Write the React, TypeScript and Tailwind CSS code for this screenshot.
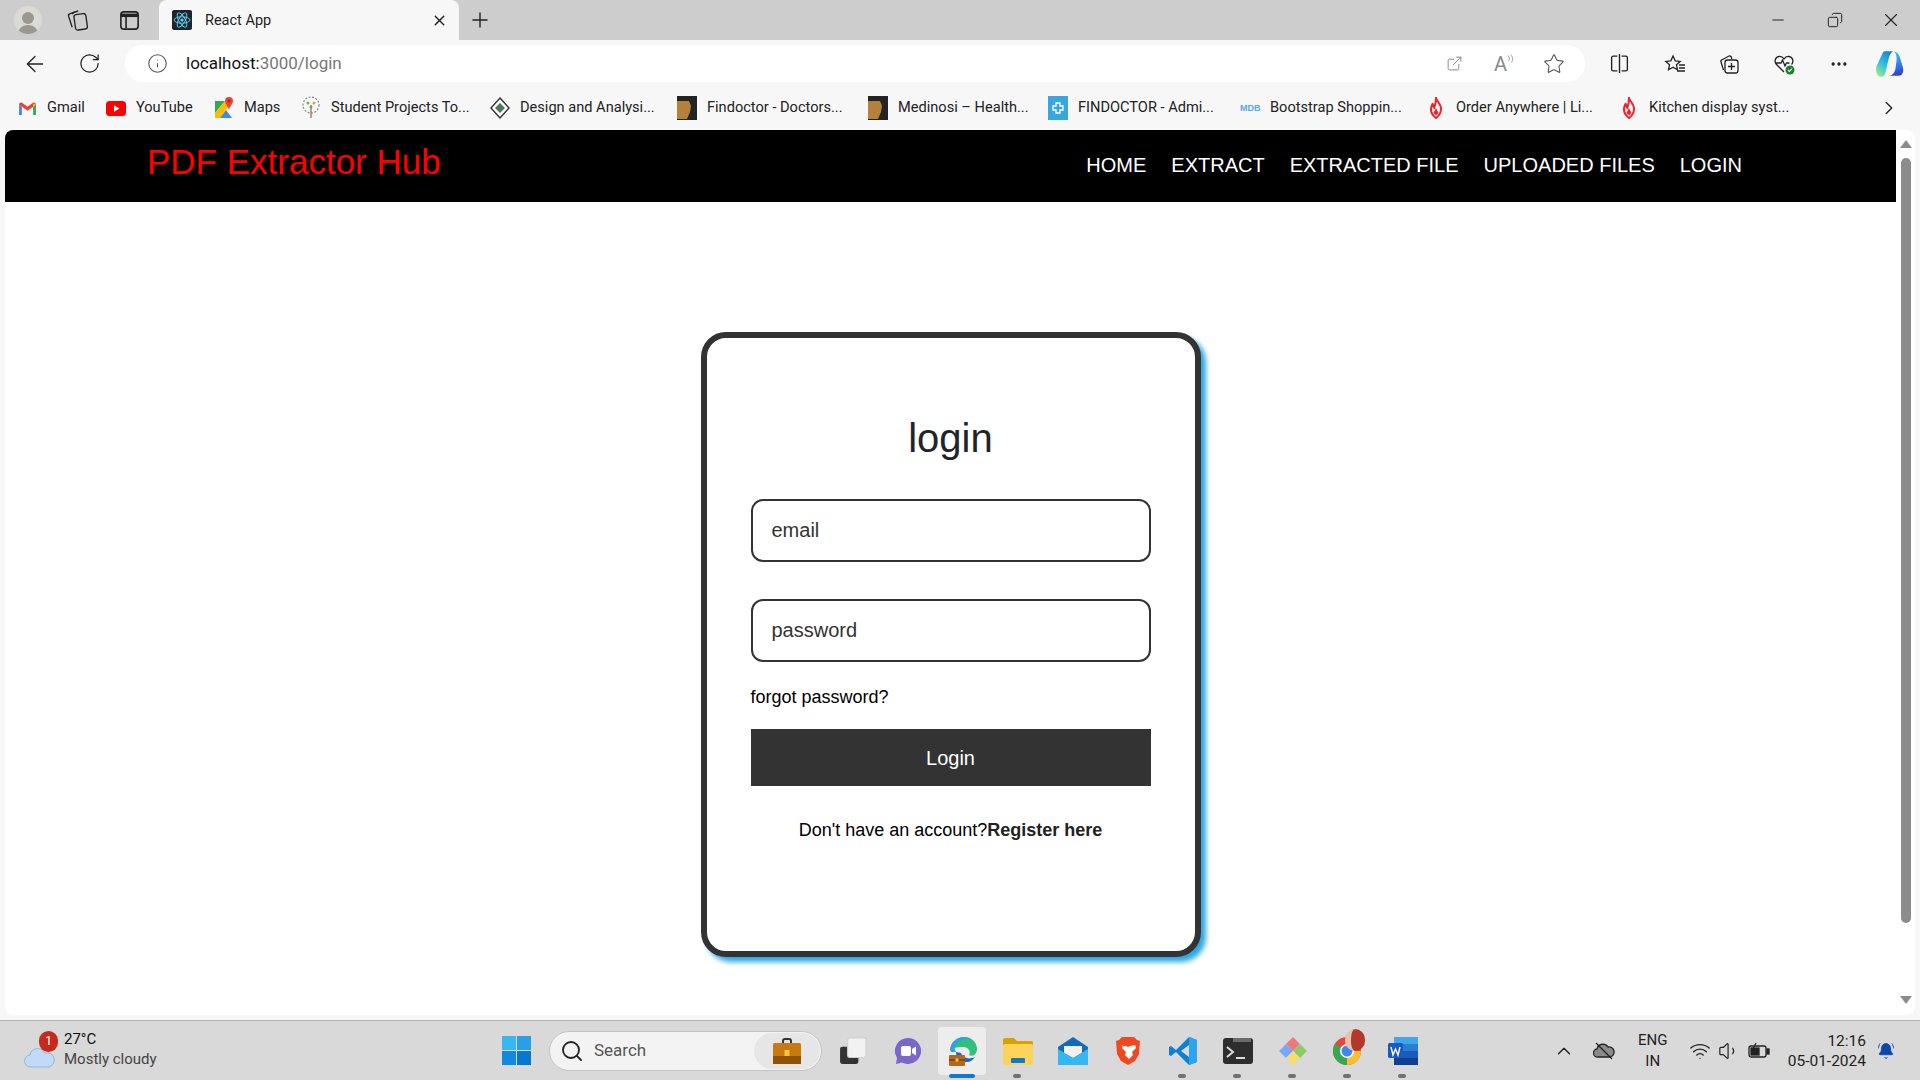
import React from "react"
import {
    ArrowLeft,
    BellRing,
    ChevronRight,
    ChevronUp,
    Copy,
    Ellipsis,
    ExternalLink,
    Info,
    Minus,
    Plus,
    RotateCw,
    Search,
    Star,
    Volume1,
    Wifi,
    X,
} from "lucide-react"

const GmailIcon = () => (
    <svg viewBox="0 0 20 16" className="w-[19px] h-[15px]">
        <path d="M1 15V4l3 2v9H1z" fill="#4285f4" />
        <path d="M16 15V6l3-2v11h-3z" fill="#34a853" />
        <path d="M1 4c0-2 2-3 3.500-2L10 6l5.500-4C17 1 19 2 19 4l-3 2-6 4.500L4 6 1 4z" fill="#ea4335" />
        <path d="M16 2.500 19 4l-3 2V2.500z" fill="#fbbc04" />
    </svg>
)

const YoutubeIcon = () => (
    <svg viewBox="0 0 20 15" className="w-5 h-[15px]">
        <rect width="20" height="15" rx="3.500" fill="#f00" />
        <path d="M8 4.200v6.600l5.500-3.300L8 4.200z" fill="#fff" />
    </svg>
)

const MapsIcon = () => (
    <svg viewBox="0 0 20 24" className="w-5 h-6">
        <path d="M1 5h10L1 17V5z" fill="#34a853" />
        <path d="M1 17 11 5l3 6-8 11H1v-5z" fill="#fbbc04" />
        <path d="M6 22l6-8 6 8H6z" fill="#4285f4" />
        <path d="M15 1a4 4 0 0 1 4 4c0 3-4 6-4 9-.5-3-4-6-4-9a4 4 0 0 1 4-4z" fill="#ea4335" />
        <circle cx="15" cy="5" r="1.400" fill="#a52714" />
    </svg>
)

const TreeIcon = () => (
    <svg viewBox="0 0 20 24" className="w-5 h-6">
        <circle cx="10" cy="9" r="8" fill="none" stroke="#7f8f7a" strokeWidth="1.200" strokeDasharray="2 1.500" />
        <circle cx="7" cy="7" r="1.500" fill="#7fae5a" />
        <circle cx="13" cy="7" r="1.500" fill="#d9a441" />
        <circle cx="10" cy="11" r="1.500" fill="#6d9ccf" />
        <path d="M10 9v13" stroke="#9b8468" strokeWidth="1.500" />
    </svg>
)

const DiamondIcon = () => (
    <svg viewBox="0 0 20 24" className="w-5 h-6">
        <path d="M10 2 19 12 10 22 1 12 10 2z" fill="#fff" stroke="#333" strokeWidth="1.400" />
        <path d="M10 7l5 5-5 5-5-5 5-5z" fill="#4c7a5a" />
    </svg>
)

const FindoctorIcon = () => (
    <svg viewBox="0 0 20 24" className="w-5 h-6">
        <rect width="20" height="24" fill="#232323" />
        <path d="M0 5h12l2 5-1 6-3 7H0V5z" fill="#b57f3c" />
    </svg>
)

const CrossIcon = () => (
    <svg viewBox="0 0 20 24" className="w-5 h-6">
        <rect width="20" height="24" fill="#3aa6e0" />
        <path d="M8 7h4v3h3v4h-3v3H8v-3H5v-4h3V7z" fill="none" stroke="#fff" strokeWidth="1.300" />
    </svg>
)

const MdbIcon = () => (
    <div className="w-5 text-[9px] font-bold leading-none text-[#5aa5e8] font-['Liberation_Sans',sans-serif]">
        MDB
    </div>
)

const FlameIcon = () => (
    <svg viewBox="0 0 16 26" className="w-[14px] h-[22px]">
        <path
            d="M8 1c0 3 6 7 6 13 0 3-1 6-3 8l-3 3-3-3c-2-2-3-5-3-8 0-2 1-4 2-6l2 5c1-3 2-8 2-12z"
            fill="none"
            stroke="#e8262c"
            strokeWidth="2.400"
            strokeLinejoin="round"
        />
        <path d="M8 13l-3 6 3 3 3-3-3-6z" fill="#e8262c" />
    </svg>
)

const ReactFavicon = () => (
    <svg viewBox="0 0 20 20" className="w-5 h-5">
        <rect width="20" height="20" rx="2" fill="#20232a" />
        <g fill="none" stroke="#61dafb" strokeWidth="0.900">
            <ellipse cx="10" cy="10" rx="8" ry="3.200" />
            <ellipse cx="10" cy="10" rx="8" ry="3.200" transform="rotate(60 10 10)" />
            <ellipse cx="10" cy="10" rx="8" ry="3.200" transform="rotate(120 10 10)" />
        </g>
        <circle cx="10" cy="10" r="1.600" fill="#61dafb" />
    </svg>
)

const bookmarks = [
    { icon: <GmailIcon />, label: "Gmail", width: "w-[89px]" },
    { icon: <YoutubeIcon />, label: "YouTube", width: "w-[108px]" },
    { icon: <MapsIcon />, label: "Maps", width: "w-[87px]" },
    { icon: <TreeIcon />, label: "Student Projects To...", width: "w-[189px]" },
    { icon: <DiamondIcon />, label: "Design and Analysi...", width: "w-[187px]" },
    { icon: <FindoctorIcon />, label: "Findoctor - Doctors...", width: "w-[191px]" },
    { icon: <FindoctorIcon />, label: "Medinosi – Health...", width: "w-[180px]" },
    { icon: <CrossIcon />, label: "FINDOCTOR - Admi...", width: "w-[192px]" },
    { icon: <MdbIcon />, label: "Bootstrap Shoppin...", width: "w-[186px]" },
    { icon: <FlameIcon />, label: "Order Anywhere | Li...", width: "w-[193px]" },
    { icon: <FlameIcon />, label: "Kitchen display syst...", width: "w-[240px]" },
]

const navLinks = ["HOME", "EXTRACT", "EXTRACTED FILE", "UPLOADED FILES", "LOGIN"]

const TabBar = () => (
    <div className="h-10 flex items-end bg-[#cdcdcd] shrink-0">
        <div className="w-[159px] h-10 flex items-center">
            <div className="ml-[14px] w-[28px] h-[28px] rounded-full bg-[#dcdad6] flex flex-col items-center justify-end overflow-hidden">
                <div className="w-[12px] h-[12px] rounded-full bg-[#9b9892] mb-[1px]" />
                <div className="w-[20px] h-[9px] rounded-t-full bg-[#9b9892]" />
            </div>
            <svg viewBox="0 0 20 20" className="w-[24px] h-[24px] ml-[23px]" fill="none" stroke="#222" strokeWidth="1.100">
                <rect x="8" y="5" width="10" height="13" rx="2" transform="rotate(-8 13 11)" />
                <path d="M6 16 3 7c-.3-1 .3-2 1.300-2.300L11 2.500" />
                <path d="M8 3 6 5" />
            </svg>
            <svg viewBox="0 0 20 20" className="w-[23px] h-[23px] ml-[29px]" fill="none" stroke="#222" strokeWidth="1.400">
                <rect x="2.500" y="2.500" width="15" height="15" rx="2.500" />
                <path d="M2.500 5.500h15" strokeWidth="3" />
                <path d="M7 6v11" />
            </svg>
        </div>
        <div className="w-[300px] h-10 bg-[#f7f7f7] rounded-t-lg flex items-center pl-[13px] pr-[11px]">
            <ReactFavicon />
            <span className="ml-[13px] mt-[1px] text-[14.500px] text-[#222]">React App</span>
            <X className="ml-auto w-[17px] h-[17px] text-[#222]" strokeWidth={2} />
        </div>
        <div className="h-10 flex items-center ml-[9px]">
            <Plus className="w-[24px] h-[24px] text-[#222]" strokeWidth={1.400} />
        </div>
        <div className="h-10 ml-auto flex items-center text-[#222]">
            <Minus className="w-[18px] h-[18px]" strokeWidth={1.300} />
            <Copy className="w-[16px] h-[16px] ml-[40px] -scale-x-100" strokeWidth={1.500} />
            <X className="w-[22px] h-[22px] ml-[37px] mr-[18px]" strokeWidth={1.200} />
        </div>
    </div>
)

const CopilotIcon = () => (
    <svg viewBox="0 0 28 28" className="w-[30px] h-[30px]">
        <defs>
            <linearGradient id="copilotLeft" x1="0.700" y1="0" x2="0.200" y2="1">
                <stop offset="0" stopColor="#1d7fd8" />
                <stop offset="0.550" stopColor="#2ec8d8" />
                <stop offset="1" stopColor="#a5e88a" />
            </linearGradient>
            <linearGradient id="copilotRight" x1="0.400" y1="0" x2="0.600" y2="1">
                <stop offset="0" stopColor="#46c8f0" />
                <stop offset="0.600" stopColor="#2a7ee8" />
                <stop offset="1" stopColor="#3a35c8" />
            </linearGradient>
        </defs>
        <path d="M9 2h8c-2 1-3 3-4 6l-3 13c-.5 3-2 5-4 5-3 0-5-3-5-6 0-2 0-3 1-5L7 4c.4-1.300 1-2 2-2z" fill="url(#copilotLeft)" />
        <path d="M17 2c3 0 5 2 6 5l3 10c1 3 0 8-4 8h-9c3 0 5-2 6-6l1-7c.5-4 0-9-3-10z" fill="url(#copilotRight)" />
    </svg>
)

const Toolbar = () => (
    <div className="h-[43px] pt-[4px] flex items-center bg-[#f7f7f7] shrink-0">
        <ArrowLeft className="ml-[22px] w-[26px] h-[26px] text-[#222]" strokeWidth={1.200} />
        <RotateCw className="ml-[30px] w-[23px] h-[23px] text-[#222]" strokeWidth={1.300} />
        <div className="ml-[24px] w-[1460px] h-[37px] bg-white rounded-[18px] flex items-center">
            <Info className="ml-[22px] w-[21px] h-[21px] text-[#555]" strokeWidth={1.200} />
            <div className="ml-[18px] text-[17px] text-[#777]">
                <span className="text-[#111]">localhost:</span>3000/login
            </div>
            <div className="ml-auto flex items-center text-[#8a8a8a]">
                <ExternalLink className="w-[17px] h-[17px]" strokeWidth={1.400} />
                <div className="ml-[31px] w-[22px] h-[22px] flex items-center">
                    <span className="text-[20px] leading-none">A</span>
                    <svg viewBox="0 0 8 10" className="w-[7px] h-[10px] -mt-[10px]" fill="none" stroke="#8a8a8a" strokeWidth="1">
                        <path d="M1 1c2 2 2 4 1 6M4 0c3 3 3 6 1 9" />
                    </svg>
                </div>
                <Star className="ml-[27px] mr-[20px] w-[22px] h-[22px] text-[#555]" strokeWidth={1.200} />
            </div>
        </div>
        <svg viewBox="0 0 20 20" className="ml-[24px] w-[21px] h-[21px]" fill="none" stroke="#222" strokeWidth="1.300">
            <path d="M8 3H4a1.500 1.500 0 0 0-1.500 1.500v11A1.500 1.500 0 0 0 4 17h4M12 3h4a1.500 1.500 0 0 1 1.500 1.500v11A1.500 1.500 0 0 1 16 17h-4M10 1v18" />
        </svg>
        <svg viewBox="0 0 22 20" className="ml-[34px] w-[22px] h-5" fill="none" stroke="#222" strokeWidth="1.300">
            <path d="M9 2l2.200 4.800 5 .6-3.700 3.400 1 5L9 13.300 4.500 15.800l1-5L1.800 7.400l5-.6L9 2z" />
            <path d="M15 11h6M15 14h6M13 17h8" />
        </svg>
        <svg viewBox="0 0 22 22" className="ml-[32px] w-[22px] h-[22px]" fill="none" stroke="#222" strokeWidth="1.300">
            <rect x="7" y="7" width="13" height="13" rx="2.500" />
            <path d="M13.500 10v7M10 13.500h7M5.500 17 3 9c-.3-1 .2-2 1.200-2.300L11 3c1-.4 2 .2 2.300 1l.5 2" />
        </svg>
        <svg viewBox="0 0 22 22" className="ml-[33px] w-[22px] h-[22px]">
            <path
                d="M11 19 3.500 11.500C1 9 2 4 6 3.500c2-.2 4 .8 5 2.500 1-1.700 3-2.700 5-2.500 4 .5 5 5.500 2.500 8M3 10h5l1.500-3 2.500 6 1.500-3h3"
                fill="none"
                stroke="#222"
                strokeWidth="1.300"
            />
            <circle cx="17" cy="17" r="4.500" fill="#1b7f2e" />
            <path d="M15 17l1.500 1.500 2.500-3" fill="none" stroke="#fff" strokeWidth="1.100" />
        </svg>
        <Ellipsis className="ml-[34px] w-5 h-5 text-[#222]" strokeWidth={2} />
        <div className="ml-[26px]">
            <CopilotIcon />
        </div>
    </div>
)

const BookmarksBar = () => (
    <div className="h-[47px] pt-[3px] flex items-center bg-[#f7f7f7] pl-[17px] shrink-0">
        {bookmarks.map((b) => (
            <div key={b.label} className={`${b.width} shrink-0 flex items-center`}>
                <div className="w-5 h-6 flex items-center justify-center shrink-0">{b.icon}</div>
                <span className="ml-[10px] text-[14.600px] text-[#222] whitespace-nowrap">{b.label}</span>
            </div>
        ))}
        <ChevronRight className="ml-[19px] w-[22px] h-[22px] text-[#222]" strokeWidth={1.500} />
    </div>
)

const ScrollBar = () => (
    <div className="w-[19px] bg-white flex flex-col items-center shrink-0 rounded-tr-lg rounded-br-lg">
        <div className="mt-[10px] w-0 h-0 border-x-[6px] border-x-transparent border-b-[8px] border-b-[#8c8c8c]" />
        <div className="mt-[10px] w-[10px] h-[765px] bg-[#8c8c8c] rounded-full" />
        <div className="mt-[73px] w-0 h-0 border-x-[6px] border-x-transparent border-t-[8px] border-t-[#8c8c8c]" />
    </div>
)

const LoginCard = () => (
    <div className="w-[500px] h-[625px] mt-[130px] mx-auto border-[6px] border-[#333] rounded-[25px] bg-white shadow-[5px_5px_5px_#2ea8e2] px-[44px] pt-[76px] shrink-0">
        <h2 className="text-[40px] leading-[48px] text-center text-[#212529]">login</h2>
        <input
            placeholder="email"
            className="block w-full h-[63px] mt-[37px] px-[19px] border-2 border-[#333] rounded-[12px] text-[20px] placeholder:text-[#333] outline-none"
        />
        <input
            placeholder="password"
            className="block w-full h-[63px] mt-[37px] px-[19px] border-2 border-[#333] rounded-[12px] text-[20px] placeholder:text-[#333] outline-none"
        />
        <div className="mt-[24px] text-[18px] leading-[22px] text-black">forgot password?</div>
        <button className="block w-full h-[57px] mt-[21px] bg-[#333] text-white text-[20px]">Login</button>
        <div className="mt-[33px] text-[18px] leading-[22px] text-center text-black">
            Don't have an account?<span className="font-bold text-[#222]">Register here</span>
        </div>
    </div>
)

const Page = () => (
    <div className="flex-1 flex min-h-0 ml-[5px] mr-[5px] mb-[5px] bg-white rounded-lg overflow-hidden font-['Liberation_Sans',sans-serif]">
        <div className="flex-1 flex flex-col min-w-0">
            <div className="h-[72px] bg-black flex items-start shrink-0">
                <div className="ml-[142px] mt-[12px] text-[35px] leading-[40px] text-[#f00]">PDF Extractor Hub</div>
                <div className="ml-auto mr-[154px] mt-[23px] flex gap-[25px] text-[20px] leading-[24px] text-white">
                    {navLinks.map((link) => (
                        <span key={link}>{link}</span>
                    ))}
                </div>
            </div>
            <LoginCard />
        </div>
        <ScrollBar />
    </div>
)

const WeatherIcon = () => (
    <div className="relative w-[32px] h-[32px]">
        <div className="absolute left-[23px] top-[6px] w-[8px] h-[8px] rounded-full bg-[#f08a24]" />
        <svg viewBox="0 0 32 24" className="absolute left-0 top-[10px] w-[32px] h-[24px]">
            <path d="M7 22a6 6 0 0 1-1-12 8 8 0 0 1 15-2 7 7 0 0 1 4 14H7z" fill="#c3daf6" stroke="#8fb6e6" strokeWidth="1" />
        </svg>
        <div className="absolute left-[15px] -top-[4px] w-[19px] h-[21px] rounded-full bg-[#c42b1c] text-white text-[12px] leading-[21px] text-center">
            1
        </div>
    </div>
)

const taskIcons = [
    {
        name: "task",
        icon: (
            <svg viewBox="0 0 26 26" className="w-[28px] h-[28px]">
                <rect x="1" y="9" width="17" height="16" rx="2" fill="#333" />
                <rect x="8" y="1" width="17" height="18" rx="2" fill="#f2f2f2" stroke="#d0d0d0" />
            </svg>
        ),
    },
    {
        name: "meet",
        icon: (
            <svg viewBox="0 0 28 28" className="w-[28px] h-[28px]">
                <path d="M14 1a13 13 0 1 1-6 24.500L2 27l1-6A13 13 0 0 1 14 1z" fill="#7b66c9" />
                <rect x="7" y="9" width="10" height="10" rx="2" fill="#fff" />
                <path d="M18 12l4-2.500v9L18 16v-4z" fill="#fff" />
            </svg>
        ),
    },
    {
        name: "edge",
        active: true,
        icon: (
            <svg viewBox="0 0 30 30" className="w-[30px] h-[30px]">
                <path d="M2 14C3 6 9 1 16 1c8 0 13 6 13 12 0 5-4 8-8 6 2-3 0-8-6-8-6 0-10 1-13 3z" fill="#30c07a" />
                <path d="M2 14C3 6 9 1 16 1c3 0 6 1 8 3-6-2-14 0-17 6-1 2 0 4 1 6-3 0-5 1-6-2z" fill="#2ba3e0" />
                <path d="M8 16c0 6 5 11 11 10 3 0 6-2 8-5-6 3-12 1-14-4l-5-1z" fill="#1469c0" />
                <rect x="1" y="19" width="16" height="11" rx="1" fill="#b5651d" />
                <rect x="1" y="23" width="16" height="2" fill="#8a4a10" />
                <rect x="7.500" y="22.500" width="3" height="3" fill="#f5c542" />
            </svg>
        ),
    },
    {
        name: "files",
        dot: true,
        icon: (
            <svg viewBox="0 0 30 28" className="w-[30px] h-[28px]">
                <path d="M0 3a2 2 0 0 1 2-2h9l3 3h14a2 2 0 0 1 2 2v4H0V3z" fill="#d9a000" />
                <rect y="7" width="30" height="21" rx="2" fill="#fcd45a" />
                <rect x="8" y="21" width="14" height="5" rx="1" fill="#0f78d4" />
            </svg>
        ),
    },
    {
        name: "mail",
        icon: (
            <svg viewBox="0 0 30 30" className="w-[30px] h-[30px]">
                <path d="M0 11 15 1l15 10v18H0V11z" fill="#0f6cbd" />
                <path d="M6 10h18v7l-9 5-9-5v-7z" fill="#f2f2f2" />
                <path d="M0 13l15 9 15-9v16H0V13z" fill="#35b8f1" />
            </svg>
        ),
    },
    {
        name: "brave",
        icon: (
            <svg viewBox="0 0 26 30" className="w-[26px] h-[30px]">
                <path d="M7 1h12l3 3 3 1-1 13-4 7-7 4-7-4-4-7L1 5l3-1 3-3z" fill="#f1491f" />
                <path d="M6 9l5 1 2 1 2-1 5-1 1 3-4 4 1 3-4 4-4-4 1-3-4-4 1-3z" fill="#fff" />
            </svg>
        ),
    },
    {
        name: "vscode",
        dot: true,
        icon: (
            <svg viewBox="0 0 30 30" className="w-[30px] h-[30px]">
                <path d="M21 1 8 14 3 10l-2 1v8l2 1 5-4 13 13 8-3V4l-8-3z" fill="#0f7fcf" />
                <path d="M21 1l8 3v22l-8 3V1z" fill="#2ba6ec" />
                <path d="M21 9v12l-8-6 8-6z" fill="#d9d9d9" />
            </svg>
        ),
    },
    {
        name: "terminal",
        dot: true,
        icon: (
            <svg viewBox="0 0 30 26" className="w-[30px] h-[26px]">
                <rect width="30" height="26" rx="3" fill="#2e2e2e" />
                <rect x="10" width="18" height="4" fill="#6b6b6b" />
                <path d="M4 9l6 5-6 5" fill="none" stroke="#ddd" strokeWidth="2" />
                <path d="M13 20h9" stroke="#ddd" strokeWidth="2" />
            </svg>
        ),
    },
    {
        name: "git",
        dot: true,
        icon: (
            <svg viewBox="0 0 30 30" className="w-[30px] h-[30px]">
                <path d="M15 1l7 7-7 7-7-7 7-7z" fill="#ef7a7a" />
                <path d="M8 8l7 7-7 7-7-7 7-7z" fill="#7aa7f5" />
                <path d="M22 8l7 7-7 7-7-7 7-7z" fill="#8bc96a" />
                <path d="M15 15l7 7-7 7-7-7 7-7z" fill="#f5dd70" />
            </svg>
        ),
    },
    {
        name: "chrome",
        dot: true,
        icon: (
            <div className="relative w-[32px] h-[32px]">
                <svg viewBox="0 0 30 30" className="w-[30px] h-[30px] mt-[2px]">
                    <circle cx="15" cy="15" r="14" fill="#e8453c" />
                    <path d="M15 29A14 14 0 0 1 2.900 8L15 15z" fill="#34a853" />
                    <path d="M15 29A14 14 0 0 0 29 15l-14 0z" fill="#fbc02d" />
                    <circle cx="15" cy="15" r="7" fill="#fff" />
                    <circle cx="15" cy="15" r="5.500" fill="#4285f4" />
                </svg>
                <div className="absolute left-[13px] -top-[7px] w-[20px] h-[22px] rounded-full bg-[#b3382c] border-l-[6px] border-[#e3c4a8]" />
            </div>
        ),
    },
    {
        name: "word",
        dot: true,
        icon: (
            <svg viewBox="0 0 30 30" className="w-[30px] h-[30px]">
                <rect x="6" y="1" width="24" height="28" rx="2" fill="#2b7cd3" />
                <rect x="6" y="1" width="24" height="7" fill="#41a5ee" />
                <rect x="6" y="15" width="24" height="7" fill="#185abd" />
                <rect x="6" y="22" width="24" height="7" fill="#103f91" />
                <rect y="7" width="15" height="15" rx="1.500" fill="#185abd" />
                <path d="M3 11l2 8 2.500-6 2.500 6 2-8" fill="none" stroke="#fff" strokeWidth="1.400" />
            </svg>
        ),
    },
]

const Taskbar = () => (
    <div className="h-[60px] bg-[#d9d9d9] border-t border-[#b5b5b5] flex items-center shrink-0">
        <div className="w-[502px] flex items-center pl-[24px] shrink-0">
            <WeatherIcon />
            <div className="ml-[8px] -mt-[3px] text-[15px] leading-[20px]">
                <div className="text-[#111]">27°C</div>
                <div className="text-[#444]">Mostly cloudy</div>
            </div>
        </div>
        <svg viewBox="0 0 29 29" className="w-[29px] h-[29px] shrink-0">
            <rect width="14" height="14" fill="#38b6f5" />
            <rect x="15" width="14" height="14" fill="#2a9fe8" />
            <rect y="15" width="14" height="14" fill="#1089de" />
            <rect x="15" y="15" width="14" height="14" fill="#0878cf" />
        </svg>
        <div className="ml-[18px] w-[273px] h-[40px] rounded-full bg-[#f3f3f3] border border-[#c4c4c4] flex items-center shrink-0">
            <Search className="ml-[10px] w-[24px] h-[24px] text-[#222]" strokeWidth={1.800} />
            <span className="ml-[10px] text-[17px] text-[#555]">Search</span>
            <div className="ml-auto mr-[1px] w-[66px] h-[36px] rounded-full bg-[#e6e6e6] flex items-center justify-center">
                <svg viewBox="0 0 28 26" className="w-[28px] h-[26px]">
                    <path d="M10 6V3a2 2 0 0 1 2-2h4a2 2 0 0 1 2 2v3" fill="none" stroke="#333" strokeWidth="2" />
                    <rect y="5" width="28" height="21" rx="1.500" fill="#c77a12" />
                    <rect y="18" width="28" height="8" fill="#8f5209" />
                    <rect x="11.500" y="12" width="5" height="6" fill="#f5c542" />
                </svg>
            </div>
        </div>
        <div className="ml-[3px] flex items-center shrink-0">
            {taskIcons.map((t) => (
                <div key={t.name} className="w-[55px] h-[60px] flex items-center justify-center relative">
                    {t.active && <div className="absolute left-[3px] top-[6px] w-[48px] h-[48px] rounded-[4px] bg-[#ededed]" />}
                    <div className="relative">{t.icon}</div>
                    {t.active && <div className="absolute left-[14px] bottom-[3px] w-[26px] h-[4px] rounded-full bg-[#0f78d4]" />}
                    {t.dot && <div className="absolute left-[23px] bottom-[3px] w-[8px] h-[4px] rounded-full bg-[#707070]" />}
                </div>
            ))}
        </div>
        <div className="ml-auto flex items-center text-[#222]">
            <ChevronUp className="w-[22px] h-[22px]" strokeWidth={1.500} />
            <svg viewBox="0 0 22 18" className="ml-[18px] w-[22px] h-[18px]" fill="#8a8a8a" stroke="#222" strokeWidth="1.300">
                <path d="M5 15a4 4 0 0 1-1-8 6 6 0 0 1 11-2 5 5 0 0 1 2 10H5z" />
                <path d="M3 1l16 16" />
            </svg>
            <div className="ml-[18px] w-[40px] text-[15px] leading-[21px] text-center">
                ENG
                <br />
                IN
            </div>
            <Wifi className="ml-[16px] w-[22px] h-[22px]" strokeWidth={1.500} />
            <Volume1 className="ml-[7px] w-[22px] h-[22px]" strokeWidth={1.300} />
            <svg viewBox="0 0 22 18" className="ml-[8px] w-[22px] h-[18px]" fill="none" stroke="#222" strokeWidth="1.300">
                <rect x="1" y="4" width="17" height="11" rx="2" />
                <rect x="3" y="6" width="8" height="7" fill="#222" />
                <rect x="19" y="7" width="2" height="5" fill="#222" />
                <path d="M8 1 5 7h4l-2 5" />
            </svg>
            <div className="ml-[18px] text-[15.500px] leading-[20px] text-right">
                <div>12:16</div>
                <div>05-01-2024</div>
            </div>
            <BellRing className="ml-[11px] mr-[25px] w-[18px] h-[20px] text-[#0a47a9] fill-[#0a47a9]" strokeWidth={1} />
        </div>
    </div>
)

export default function App() {
    return (
        <div className="w-[1920px] h-[1080px] flex flex-col bg-[#f7f7f7] overflow-hidden font-['Roboto',sans-serif]">
            <TabBar />
            <Toolbar />
            <BookmarksBar />
            <Page />
            <Taskbar />
        </div>
    )
}
